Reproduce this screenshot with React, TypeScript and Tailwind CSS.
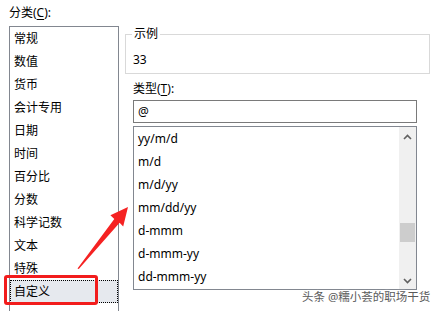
import React from "react";

const leftItems = ["常规", "数值", "货币", "会计专用", "日期", "时间", "百分比", "分数", "科学记数", "文本", "特殊", "自定义"];
const typeItems = ["yy/m/d", "m/d", "m/d/yy", "mm/dd/yy", "d-mmm", "d-mmm-yy", "dd-mmm-yy"];

export default function App() {
  return (
    <div
      className="relative w-[434px] h-[311px] overflow-hidden bg-white text-[12px] text-black flex"
      style={{ fontFamily: '"Noto Sans", "Noto Sans CJK SC", sans-serif' }}
    >
      {/* Left column */}
      <div className="ml-[9px] w-[110px] flex flex-col shrink-0">
        <div className="h-[26px] shrink-0 flex items-center leading-[18px]">
          分类(<span className="underline underline-offset-2">C</span>):
        </div>
        <div className="border border-[#828790] h-[300px] shrink-0 flex flex-col">
          {leftItems.map((t, i) =>
            i === leftItems.length - 1 ? (
              <div
                key={t}
                className="h-[23px] shrink-0 flex items-center pl-[3px] bg-[#e6e9ee] border border-dotted border-black"
              >
                {t}
              </div>
            ) : (
              <div key={t} className="h-[23px] shrink-0 flex items-center pl-[4px]">
                {t}
              </div>
            )
          )}
        </div>
      </div>

      {/* Right column */}
      <div className="ml-[6px] w-[305px] flex flex-col shrink-0">
        <fieldset className="mt-[27px] border border-[#d9d9d9] px-[6px] pb-[4px]">
          <legend className="px-[2px] leading-[14px]">示例</legend>
          <div className="pt-[10px] ml-[1px] leading-[18px]">33</div>
        </fieldset>

        <div className="ml-[8px] w-[284px] flex flex-col">
          <div className="mt-[6px] mb-[2px] leading-[18px]">
            类型(<span className="underline underline-offset-2">T</span>):
          </div>
          <div className="h-[23px] border border-[#7a7a7a] flex items-center pl-[4px]">@</div>
          <div className="mt-[3px] h-[164px] border border-[#828790] flex">
            <div className="flex-1 flex flex-col">
              {typeItems.map((t) => (
                <div key={t} className="h-[23px] shrink-0 flex items-center pl-[4px]">
                  {t}
                </div>
              ))}
            </div>
            <div className="w-[17px] bg-[#f0f0f0] flex flex-col items-center">
              <svg width="9" height="6" viewBox="0 0 9 6" className="mt-[7px]">
                <path d="M1 5 L4.5 1.5 L8 5" fill="none" stroke="#606060" strokeWidth="1.6" />
              </svg>
              <div className="mt-[83px] w-[15px] h-[19px] bg-[#cdcdcd]" />
              <div className="flex-1" />
              <svg width="9" height="6" viewBox="0 0 9 6" className="mb-[5px]">
                <path d="M1 1 L4.5 4.5 L8 1" fill="none" stroke="#606060" strokeWidth="1.6" />
              </svg>
            </div>
          </div>
        </div>
      </div>

      {/* Red highlight box */}
      <div className="absolute left-[4px] top-[275px] w-[94px] h-[30px] border-[3px] border-[#f21c1c] rounded-[3px]" />

      {/* Red arrow */}
      <svg className="absolute left-0 top-0" width="434" height="311" viewBox="0 0 434 311">
        <polygon
          points="77.5,268.5 114.3,219.0 110.4,215.2 128,207 123.2,226.4 119.6,222.8 78.8,269"
          fill="#f52222"
        />
      </svg>

      {/* Watermark */}
      <div
        className="absolute left-[302px] top-[289px] text-[11.5px] leading-[16px] text-[#5a5a5a] whitespace-nowrap"
        style={{ textShadow: "0 0 2px #fff, 0 0 2px #fff" }}
      >
        头条 @糯小荟的职场干货
      </div>
    </div>
  );
}
